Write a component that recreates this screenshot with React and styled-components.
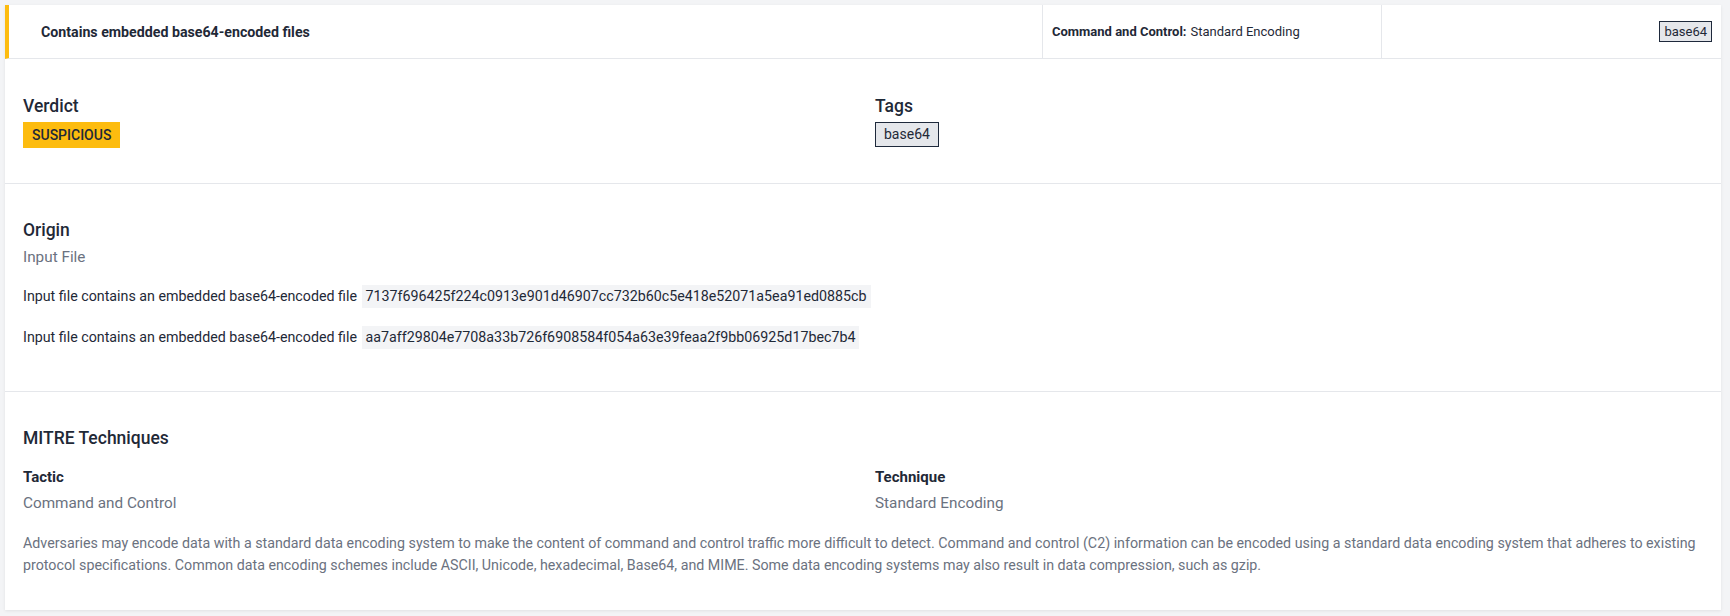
import React from 'react';
import styled, { createGlobalStyle } from 'styled-components';

const GlobalStyle = createGlobalStyle`
    html, body {
        margin: 0;
        padding: 0;
        background: #f3f4f6;
        font-family: Roboto, "Liberation Sans", Arial, sans-serif;
        color: #1f2937;
    }
`;

const hashes = [
    '7137f696425f224c0913e901d46907cc732b60c5e418e52071a5ea91ed0885cb',
    'aa7aff29804e7708a33b726f6908584f054a63e39feaa2f9bb06925d17bec7b4',
];

export default function App() {
    return (
        <Page>
            <GlobalStyle/>
            <Card>
                <HeaderRow>
                    <TitleCell>Contains embedded base64-encoded files</TitleCell>
                    <TacticCell>
                        <b>Command and Control:</b> Standard Encoding
                    </TacticCell>
                    <TagCell>
                        <Tag small>base64</Tag>
                    </TagCell>
                </HeaderRow>

                <Section pad="33px 18px 35px">
                    <TwoCols>
                        <div>
                            <Heading>Verdict</Heading>
                            <Verdict>SUSPICIOUS</Verdict>
                        </div>
                        <div>
                            <Heading>Tags</Heading>
                            <Tag>base64</Tag>
                        </div>
                    </TwoCols>
                </Section>

                <Section pad="32px 18px 42px">
                    <Heading>Origin</Heading>
                    <Muted>Input File</Muted>
                    {hashes.map(h => (
                        <HashRow key={h}>
                            Input file contains an embedded base64-encoded file <Code>{h}</Code>
                        </HashRow>
                    ))}
                </Section>

                <Section pad="32px 18px 34px" last>
                    <Heading>MITRE Techniques</Heading>
                    <TwoCols top="15px">
                        <div>
                            <SubHeading>Tactic</SubHeading>
                            <Muted gap="6px">Command and Control</Muted>
                        </div>
                        <div>
                            <SubHeading>Technique</SubHeading>
                            <Muted gap="6px">Standard Encoding</Muted>
                        </div>
                    </TwoCols>
                    <Description>
                        Adversaries may encode data with a standard data encoding system to make the content of command and control traffic more difficult to detect. Command and control (C2) information can be encoded using a standard data encoding system that adheres to existing protocol specifications. Common data encoding schemes include ASCII, Unicode, hexadecimal, Base64, and MIME. Some data encoding systems may also result in data compression, such as gzip.
                    </Description>
                </Section>
            </Card>
        </Page>
    );
}

const Page = styled.div`
    padding: 5px 9px 5px 5px;
    min-height: 100vh;
    box-sizing: border-box;
`;

const Card = styled.div`
    background: #fff;
    box-shadow: 0 1px 3px rgba(0, 0, 0, 0.08);
`;

const HeaderRow = styled.div`
    display: grid;
    grid-template-columns: 1fr 339px 340px;
    height: 54px;
    border-left: 4px solid #fdbc0f;
    border-bottom: 1px solid #e5e7eb;
    box-sizing: border-box;
    font-size: 13px;
`;

const TitleCell = styled.div`
    display: flex;
    align-items: center;
    padding-left: 32px;
    font-weight: 700;
    font-size: 14.2px;
    color: #1f2937;
`;

const TacticCell = styled.div`
    display: flex;
    align-items: center;
    gap: 4px;
    padding-left: 9px;
    border-left: 1px solid #e5e7eb;
    color: #1f2937;

    b {
        font-weight: 700;
    }
`;

const TagCell = styled.div`
    display: flex;
    align-items: center;
    justify-content: flex-end;
    padding-right: 9px;
    border-left: 1px solid #e5e7eb;
`;

const Tag = styled.span`
    display: inline-block;
    margin-top: ${p => (p.small ? '0' : '2px')};
    background: #e5e7eb;
    border: 1.5px solid #1e293b;
    color: #1f2937;
    font-size: ${p => (p.small ? '13px' : '14px')};
    line-height: ${p => (p.small ? '19px' : '23px')};
    padding: ${p => (p.small ? '0 4px' : '0 8px')};
`;

const Section = styled.div`
    padding: ${p => p.pad};
    border-bottom: ${p => (p.last ? 'none' : '1px solid #e5e7eb')};
`;

const TwoCols = styled.div`
    display: grid;
    grid-template-columns: 1fr 1fr;
    column-gap: 24px;
    margin-top: ${p => p.top || '0'};
`;

const Heading = styled.div`
    font-size: 17.5px;
    font-weight: 500;
    line-height: 28px;
    color: #1f2937;
`;

const SubHeading = styled.div`
    font-size: 15px;
    font-weight: 700;
    line-height: 20px;
    color: #1f2937;
`;

const Verdict = styled.span`
    display: inline-block;
    margin-top: 2px;
    background: #fdbc0f;
    color: #1f2937;
    font-size: 14px;
    font-weight: 500;
    line-height: 26px;
    padding: 0 9px;
`;

const Muted = styled.div`
    margin-top: ${p => p.gap || '3px'};
    font-size: 15.3px;
    line-height: 20px;
    color: #6b7280;
`;

const HashRow = styled.div`
    margin-top: 17px;
    font-size: 14.25px;
    line-height: 24px;
    color: #1f2937;
`;

const Code = styled.code`
    display: inline-block;
    margin-left: 1px;
    background: #f3f4f6;
    font-family: Roboto, "Liberation Sans", Arial, sans-serif;
    font-size: 14.25px;
    line-height: 19px;
    padding: 2px 4px;
`;

const Description = styled.p`
    margin: 19px 0 0;
    font-size: 14.25px;
    line-height: 22px;
    color: #6b7280;
`;
